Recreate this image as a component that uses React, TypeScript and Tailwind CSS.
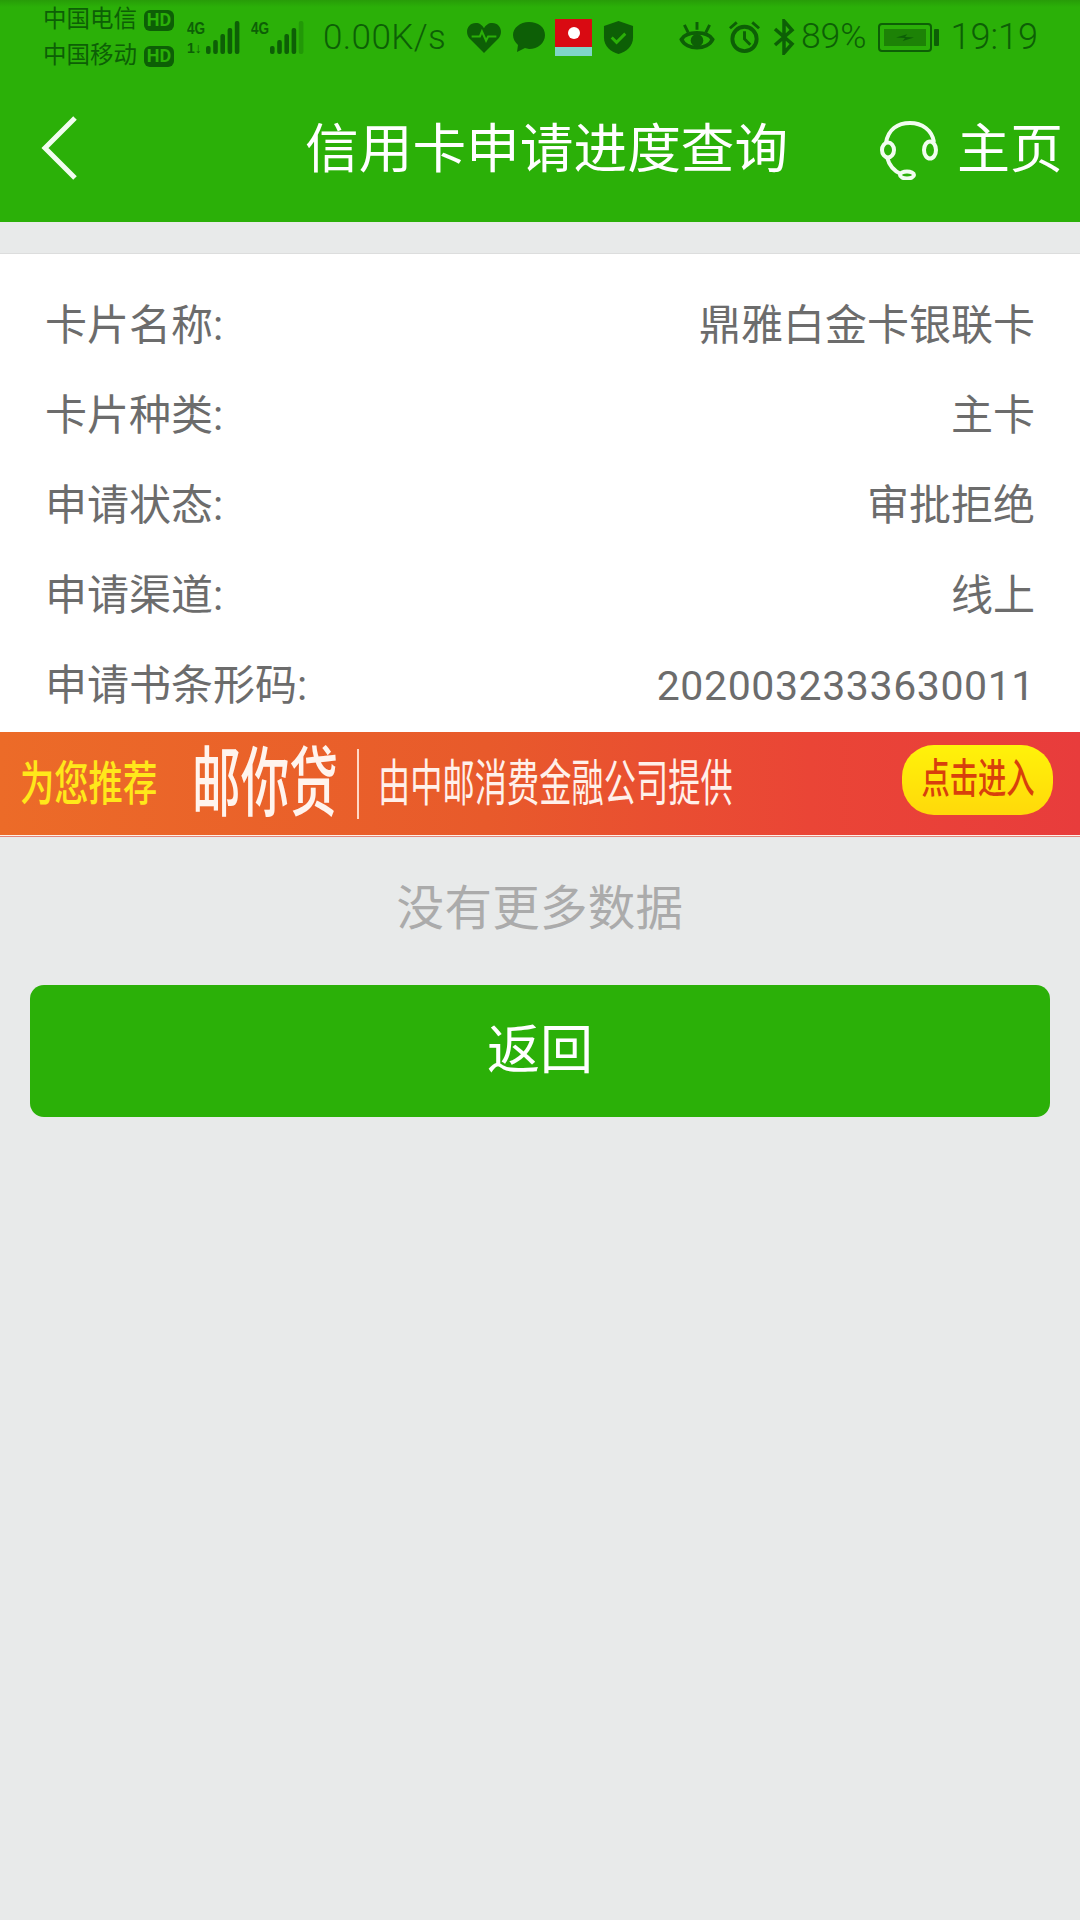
import React from "react";

const cjk = "font-['Roboto','Noto_Sans_CJK_SC',sans-serif]";
const ink = "#0d5f06";
const soft = "#f2fdf0";

function Bars({ n }: { n: number }) {
  const hs = [8, 14, 20, 26, 33];
  return (
    <svg width="34" height="33" viewBox="0 0 34 33" className="block">
      {hs.map((h, i) => (
        <rect key={i} x={i * 7.2} y={33 - h} width="4.6" height={h} rx="2" fill={ink} opacity={i < n ? 1 : 0.3} />
      ))}
    </svg>
  );
}

function Signal({ second, n }: { second?: boolean; n: number }) {
  return (
    <div className="relative w-[53px] h-[34px]">
      <span className="absolute left-0 top-[0px] text-[17px] leading-[18px] font-bold text-[#0d5f06] font-['Liberation_Sans',sans-serif] scale-x-[0.8] origin-left">4G</span>
      {second && <span className="absolute left-0 top-[21px] text-[14px] leading-[14px] font-bold text-[#0d5f06] font-['Liberation_Sans',sans-serif]">1↓</span>}
      <div className="absolute right-0 bottom-0"><Bars n={n} /></div>
    </div>
  );
}

function Hd() {
  return <span className="flex items-center justify-center w-[30px] h-[21px] rounded-[6px] bg-[#0d5f06] text-[#2bb008] text-[18px] leading-none font-bold font-['Roboto',sans-serif]">HD</span>;
}

function StatusBar() {
  return (
    <div className={`flex items-center h-[74px] pl-[43px] pr-[42px] text-[#0d5f06] bg-[linear-gradient(180deg,#279c08,#2bb008_7px)] ${cjk}`}>
      <div className="flex flex-col gap-[6px] w-[144px] pt-[2px]">
        <div className="flex items-center gap-[7px] h-[30px] text-[23.500px] leading-none whitespace-nowrap">中国电信<Hd /></div>
        <div className="flex items-center gap-[7px] h-[30px] text-[23.500px] leading-none whitespace-nowrap">中国移动<Hd /></div>
      </div>
      <div className="flex items-center gap-[11px] mt-[0px]">
        <Signal second n={5} />
        <Signal n={4} />
      </div>
      <span className="ml-[19px] text-[35px] leading-none font-light tracking-[0.4px]">0.00K/s</span>
      <div className="flex items-center ml-[20px]">
        <svg width="36" height="33" viewBox="0 0 34 32">
          <path d="M17 31 3 17C-2 11 1 2 9 2c4 0 6 2 8 5 2-3 4-5 8-5 8 0 11 9 6 15Z" fill={ink} />
          <path d="M5 15h8l2-5 4 9 2-4h8" fill="none" stroke="#2bb008" strokeWidth="2" />
        </svg>
        <svg width="36" height="34" viewBox="0 0 34 34" className="ml-[9px]">
          <path d="M17 2C8 2 1 8 1 15c0 4 2 7 5 10l-1 7 8-4c1 0 3 1 4 1 9 0 16-6 16-14S26 2 17 2Z" fill={ink} />
        </svg>
        <div className="flex flex-col w-[37px] h-[37px] ml-[8px] bg-[#d90a12]">
          <div className="flex-1 flex items-center justify-center"><span className="w-[12px] h-[12px] rounded-full bg-white" /></div>
          <div className="h-[9px] bg-[#7fd6c8]" />
        </div>
        <svg width="31" height="37" viewBox="0 0 32 36" className="ml-[11px]">
          <path d="M16 1 31 6v12c0 9-7 15-15 17C8 33 1 27 1 18V6Z" fill={ink} />
          <path d="m9 18 5 5 9-9" fill="none" stroke="#2bb008" strokeWidth="3" />
        </svg>
      </div>
      <div className="flex items-center ml-auto">
        <svg width="36" height="33" viewBox="0 0 36 34" className="mr-[13px]">
          <path d="M2 19C7 10 29 10 34 19 29 30 7 30 2 19Z" fill="none" stroke={ink} strokeWidth="4" />
          <circle cx="18" cy="20" r="6.500" fill={ink} />
          <path d="M18 1v8M5 4l4 8M31 4l-4 8" stroke={ink} strokeWidth="3" />
        </svg>
        <svg width="33" height="34" viewBox="0 0 34 34" className="mr-[12px]">
          <circle cx="17" cy="19" r="12.500" fill="none" stroke={ink} strokeWidth="4" />
          <path d="M17 11v8l6 6M2 8l7-6M32 8l-7-6" fill="none" stroke={ink} strokeWidth="3" />
        </svg>
        <svg width="22" height="36" viewBox="0 0 22 36" className="mr-[6px]">
          <path d="M2 10 19 25 11 34V2l8 9L2 26" fill="none" stroke={ink} strokeWidth="3.500" />
        </svg>
        <span className="text-[35.500px] leading-none font-light">89%</span>
        <div className="flex items-center justify-center w-[54px] h-[29px] ml-[11px] rounded-[4px] border-2 border-[#0d5f06] p-[4px]">
          <div className="flex items-center justify-center w-full h-full bg-[#1d8206]">
            <svg width="18" height="9" viewBox="0 0 16 8"><path d="M0 4 10 1 8 3.500 16 4 6 7 8 4.500Z" fill={ink} /></svg>
          </div>
        </div>
        <span className="w-[5px] h-[17px] ml-[2px] rounded-[1px] bg-[#0d5f06]" />
        <span className="ml-[12px] text-[36px] leading-none font-light">19:19</span>
      </div>
    </div>
  );
}

function Header() {
  return (
    <div className={`relative flex items-center h-[148px] pt-[4px] text-white bg-[#2bb008] ${cjk}`}>
      <svg width="40" height="66" viewBox="0 0 40 66" className="ml-[40px] mt-[-4px]">
        <path d="M35 3 5 33l30 30" fill="none" stroke={soft} strokeWidth="5" />
      </svg>
      <span className="ml-[225px] text-[53.700px] leading-none whitespace-nowrap">信用卡申请进度查询</span>
      <div className="flex items-center ml-auto mr-[17px]">
        <svg width="60" height="59" viewBox="0 0 60 59" className="mr-[17px]">
          <g fill="none" stroke={soft} strokeWidth="4">
            <path d="M6 22C8 8 18 2 30 2 42 2 52 9 54 21" />
            <ellipse cx="8" cy="29" rx="6" ry="7.500" />
            <ellipse cx="50" cy="29" rx="6" ry="8.500" />
            <path d="M7 36C9 44 14 50 21 53" />
            <ellipse cx="27" cy="54" rx="7" ry="3.500" />
          </g>
        </svg>
        <span className="text-[53px] leading-none whitespace-nowrap">主页</span>
      </div>
    </div>
  );
}

const rows: [string, string][] = [
  ["卡片名称:", "鼎雅白金卡银联卡"],
  ["卡片种类:", "主卡"],
  ["申请状态:", "审批拒绝"],
  ["申请渠道:", "线上"],
  ["申请书条形码:", "2020032333630011"],
];

function Banner() {
  return (
    <div className={`flex items-center relative h-[103px] overflow-hidden bg-[linear-gradient(90deg,#ec6b28_0%,#e85a2b_45%,#ea4536_75%,#e83c3c_100%)] ${cjk}`}>
      <span className="ml-[20px] w-[136px] text-[#ffe81a] text-[47px] leading-none font-medium whitespace-nowrap scale-x-[0.73] origin-left">为您推荐</span>
      <span className="ml-[36px] w-[144px] text-[#fff4ee] text-[76px] leading-none font-medium whitespace-nowrap scale-x-[0.64] origin-left">邮你贷</span>
      <span className="ml-[21px] w-[1.5px] h-[70px] bg-[#ffd8c6]" />
      <span className="ml-[19px] text-[#fff0ea] text-[50px] leading-none whitespace-nowrap scale-x-[0.645] origin-left">由中邮消费金融公司提供</span>
      <span className="absolute right-[27px] top-[13px] flex items-center justify-center w-[151px] h-[70px] rounded-[32px] bg-[linear-gradient(180deg,#fff20a,#ffd90a)] text-[#d8400c] text-[41px] overflow-hidden">
        <span className="whitespace-nowrap scale-x-[0.69] font-medium">点击进入</span>
      </span>
    </div>
  );
}

export default function App() {
  return (
    <div className={`flex flex-col w-[1080px] h-[1920px] overflow-hidden bg-[#e8eaea] ${cjk}`}>
      <StatusBar />
      <Header />
      <div className="mt-[31px] border-t border-[#dcdddd] bg-white">
        <div className="pt-[27px]">
          {rows.map(([k, v], i) => (
            <div key={k} className="flex items-center justify-between h-[90px] px-[45px] text-[42px] leading-none text-[#6c6c6c]">
              <span>{k}</span>
              <span className={i === 4 ? "text-[41px] tracking-[0.6px]" : ""}>{v}</span>
            </div>
          ))}
        </div>
        <div className="mt-[1px]"><Banner /></div>
      </div>
      <div className="h-[1px] bg-[#fdf1ea]" />
      <div className="h-[1px] bg-[#e2847a]" />
      <div className="flex items-center justify-center h-[148px] pb-[2px] text-[47.500px] leading-none tracking-[0.3px] text-[#ababab]">没有更多数据</div>
      <div className="flex items-center justify-center h-[132px] mx-[30px] rounded-[14px] bg-[#2bb008] text-white text-[53px] leading-none">返回</div>
    </div>
  );
}
